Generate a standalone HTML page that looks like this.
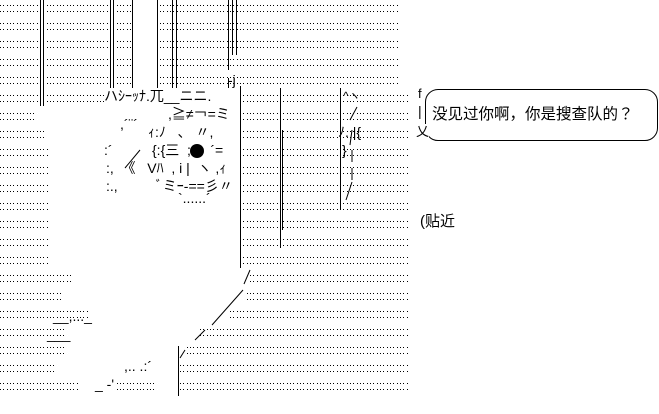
<!DOCTYPE html>
<html><head><meta charset="utf-8"><style>
html,body{margin:0;padding:0;background:#fff;width:659px;height:414px;overflow:hidden}
#c{position:absolute;left:0;top:0;width:659px;height:414px}
.t{position:absolute;font-family:"Liberation Sans","Noto Sans CJK JP",sans-serif;font-size:14px;line-height:16px;color:#000;white-space:pre}
</style></head><body>
<svg id="c" width="659" height="414" xmlns="http://www.w3.org/2000/svg">
<defs>
<pattern id="p" x="0" y="4" width="10" height="18" patternUnits="userSpaceOnUse">
<rect x="0" y="1" width="1" height="1" fill="#000"/><rect x="3" y="1" width="1" height="1" fill="#000"/><rect x="7" y="1" width="1" height="1" fill="#000"/>
<rect x="0" y="7" width="1" height="1" fill="#000"/><rect x="3" y="7" width="1" height="1" fill="#000"/><rect x="7" y="7" width="1" height="1" fill="#000"/>
</pattern>
</defs>
<rect x="0" y="0" width="659" height="399" fill="url(#p)"/>
<rect x="398" y="0" width="261" height="88" fill="#fff"/>
<rect x="410" y="88" width="249" height="326" fill="#fff"/>
<rect x="133" y="0" width="24" height="92" fill="#fff"/>
<rect x="0" y="399" width="659" height="15" fill="#fff"/>
<rect x="104" y="88" width="136" height="20" fill="#fff"/>
<polygon fill="#fff" points="37,106 240,106 240,272 250,272 250,289 245,289 245,307 228,307 228,326 200,326 200,344 185,344 185,362 178,362 178,381 180,381 180,399 155,399 155,381 115,381 115,399 80,399 80,381 57,381 57,362 65,362 65,344 67,344 67,326 88,326 88,307 62,307 62,289 72,289 72,272 50,272 50,140 45,140 45,124 37,124"/>
<g stroke="#000" stroke-width="1">
<line x1="40.5" y1="0" x2="40.5" y2="106"/><line x1="43.5" y1="0" x2="43.5" y2="106"/>
<line x1="110.5" y1="0" x2="110.5" y2="88"/><line x1="113.5" y1="0" x2="113.5" y2="88"/>
<line x1="132.5" y1="0" x2="132.5" y2="88"/>
<line x1="157.5" y1="0" x2="157.5" y2="88"/>
<line x1="172.5" y1="0" x2="172.5" y2="88"/><line x1="176.5" y1="0" x2="176.5" y2="88"/>
<line x1="228.5" y1="0" x2="228.5" y2="70"/><line x1="232.5" y1="0" x2="232.5" y2="55"/><line x1="236.5" y1="0" x2="236.5" y2="55"/>
<line x1="228.5" y1="78" x2="228.5" y2="88"/>
<line x1="240.5" y1="86" x2="240.5" y2="268"/>
<line x1="280.5" y1="88" x2="280.5" y2="248"/><line x1="282.5" y1="130" x2="282.5" y2="230"/>
<line x1="340.5" y1="88" x2="340.5" y2="210"/>
<line x1="178.5" y1="346" x2="178.5" y2="396"/>
</g>
<g stroke="#000" stroke-width="1" fill="none">
<path d="M250,270 L244,284 M243,290 L212,325 M205,330 L195,340 M185,350 L180,358"/>
<path d="M357,107 L350,120 M352,130 L350,145 M352,150 L352,162 M352,168 L352,180 M352,182 L346,200"/>
<path d="M140,150 L125,168"/>
</g>
<circle cx="197" cy="151" r="7" fill="#000"/>
</svg>
<div class="t" style="left:104px;top:88px">ハｼｰｯﾅ.兀__ニニ.</div>
<div class="t" style="left:228px;top:72px">-j</div>
<div class="t" style="left:343px;top:88px;font-size:12px">^ヽ</div>
<div class="t" style="left:168px;top:106px">,≧≠￢=ミ</div>
<div class="t" style="left:120px;top:116px">,´¨´</div>
<div class="t" style="left:148px;top:124px">ｨ:ﾉ   、 〃,</div>
<div class="t" style="left:152px;top:142px">{:{三  ;     ´=</div>
<div class="t" style="left:104px;top:142px">:´</div>
<div class="t" style="left:106px;top:160px">:,  《   Vﾊ  , i |  ヽ ,ｨ</div>
<div class="t" style="left:106px;top:178px">:.,          ﾞミｰ-==彡〃</div>
<div class="t" style="left:178px;top:190px">`......´</div>
<div class="t" style="left:338px;top:124px">ﾉ. |{</div>
<div class="t" style="left:342px;top:142px">}</div>
<div class="t" style="left:53px;top:308px">__,..._</div>
<div class="t" style="left:47px;top:326px">___</div>
<div class="t" style="left:95px;top:376px">_ -'</div>
<div class="t" style="left:124px;top:358px">,.. .:´</div>
<div style="position:absolute;left:425px;top:89px;width:231px;height:50px;border:1px solid #000;border-radius:13px"></div>
<div class="t" style="left:418px;top:86px;font-size:13px;background:#fff">f</div>
<div class="t" style="left:416px;top:124px;font-size:13px;background:#fff">乂</div>
<div class="t" style="left:418px;top:103px;font-size:14px">|</div>
<div class="t" style="left:432px;top:107px;font-size:15.5px">没见过你啊，你是搜查队的？</div>
<div class="t" style="left:420px;top:214px;font-size:15px">(贴近</div>
</body></html>
